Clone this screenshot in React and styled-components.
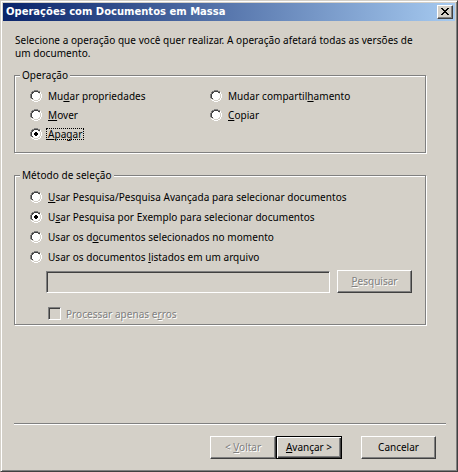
import React from "react";
import styled, { createGlobalStyle } from "styled-components";

const GlobalStyle = createGlobalStyle`
  html, body { margin: 0; padding: 0; background: #d4d0c8; }
  body {
    font-family: "Noto Sans", "Liberation Sans", sans-serif;
    font-size: 10px;
    letter-spacing: 0.05px;
    color: #000;
  }
`;

const Window = styled.div`
  width: 458px;
  height: 472px;
  box-sizing: border-box;
  background: #d4d0c8;
  border: 1px solid;
  border-color: #d4d0c8 #404040 #404040 #d4d0c8;
  box-shadow: inset 1px 1px 0 #fff, inset -1px -1px 0 #808080;
  padding: 2px;
  display: flex;
  flex-direction: column;
`;

const TitleBar = styled.div`
  height: 18px;
  flex: none;
  display: flex;
  align-items: center;
  padding: 0 2px 0 3px;
  background: linear-gradient(to right, #0a246a, #a6caf0);
`;

const Title = styled.span`
  color: #fff;
  font: bold 10px/18px "DejaVu Sans", sans-serif;
  letter-spacing: 0;
  white-space: nowrap;
`;

const CloseButton = styled.span`
  margin-left: auto;
  width: 16px;
  height: 14px;
  box-sizing: border-box;
  display: flex;
  justify-content: center;
  align-items: flex-start;
  padding-top: 2px;
  background: #d4d0c8;
  border: 1px solid;
  border-color: #fff #404040 #404040 #fff;
  box-shadow: inset -1px -1px 0 #808080;
`;

const Client = styled.div`
  flex: 1;
  min-height: 0;
  display: flex;
  flex-direction: column;
  padding: 13px 9px 10px 11px;
`;

const Intro = styled.p`
  margin: 0 0 0 1px;
  width: 410px;
  line-height: 13px;
`;

const GroupBox = styled.div`
  margin-top: ${(p) => p.$mt}px;
  width: 412px;
  box-sizing: border-box;
  border: 1px solid #808080;
  box-shadow: 1px 1px 0 #fff, inset 1px 1px 0 #fff;
  padding-bottom: ${(p) => p.$pb}px;
  display: flex;
  flex-direction: column;
`;

const GroupLabel = styled.span`
  align-self: flex-start;
  margin: -7px 0 0 5px;
  padding: 0 2px;
  background: #d4d0c8;
  line-height: 13px;
  white-space: nowrap;
`;

const RadioGrid = styled.div`
  display: grid;
  grid-template-columns: ${(p) => p.$cols};
  grid-auto-rows: 18px;
  row-gap: ${(p) => p.$gap}px;
  margin: ${(p) => p.$mt}px 0 0 15px;
`;

const Item = styled.label`
  display: flex;
  align-items: center;
  gap: 4px;
`;

const ItemText = styled.span`
  border: 1px ${(p) => (p.$focus ? "dotted #000" : "solid transparent")};
  padding: 0 1px;
  line-height: 10px;
  white-space: nowrap;
  color: ${(p) => (p.$disabled ? "#808080" : "#000")};
  text-shadow: ${(p) => (p.$disabled ? "1px 1px 0 #fff" : "none")};
`;

const Mn = styled.u`
  text-decoration: underline;
  text-underline-offset: 1px;
`;

const InputRow = styled.div`
  display: flex;
  align-items: flex-end;
  gap: 7px;
  height: 23px;
  margin: 4px 0 0 31px;
`;

const Field = styled.input`
  appearance: none;
  width: 284px;
  height: 22px;
  box-sizing: border-box;
  margin: 0;
  padding: 0 3px;
  font: inherit;
  background: #d4d0c8;
  border: 1px solid;
  border-color: #808080 #fff #fff #808080;
  box-shadow: inset 1px 1px 0 #404040, inset -1px -1px 0 #d4d0c8;
  outline: none;
`;

const Button = styled.button`
  width: ${(p) => p.$w}px;
  height: 23px;
  box-sizing: border-box;
  margin: 0 0 0 ${(p) => p.$ml || 0}px;
  padding: 0;
  font: inherit;
  line-height: 21px;
  background: #d4d0c8;
  border: 1px solid;
  border-color: ${(p) => (p.$default ? "#000" : "#fff #404040 #404040 #fff")};
  box-shadow: ${(p) =>
    p.$default
      ? "inset 1px 1px 0 #fff, inset -1px -1px 0 #404040, inset -2px -2px 0 #808080"
      : "inset -1px -1px 0 #808080"};
  color: ${(p) => (p.disabled ? "#808080" : "#000")};
  text-shadow: ${(p) => (p.disabled ? "1px 1px 0 #fff" : "none")};
  white-space: nowrap;
`;

const CheckRow = styled.div`
  display: flex;
  align-items: center;
  gap: 3px;
  height: 13px;
  margin: 14px 0 0 33px;
`;

const CheckBox = styled.span`
  width: 13px;
  height: 13px;
  box-sizing: border-box;
  flex: none;
  background: #d4d0c8;
  border: 1px solid;
  border-color: #808080 #fff #fff #808080;
  box-shadow: inset 1px 1px 0 #404040, inset -1px -1px 0 #d4d0c8;
`;

const Separator = styled.div`
  margin-top: auto;
  height: 2px;
  box-sizing: border-box;
  border-top: 1px solid #808080;
  border-bottom: 1px solid #fff;
`;

const ButtonRow = styled.div`
  display: flex;
  justify-content: flex-end;
  margin-top: 11px;
  padding-right: 10px;
`;

/* pixel maps for the classic controls */
const COLORS = { G: "#808080", D: "#404040", W: "#ffffff", H: "#ffffff", F: "#d4d0c8", X: "#000000" };
const RADIO = [
  "....GGGG....",
  "..GGDDDDGG..",
  ".GDDWWWWDDH.",
  ".GDWWWWWWFH.",
  "GDWWWWWWWWFH",
  "GDWWWWWWWWFH",
  "GDWWWWWWWWFH",
  "GDWWWWWWWWFH",
  ".GDWWWWWWFH.",
  ".HFFWWWWFFH.",
  "..HHFFFFHH..",
  "....HHHH....",
];
const DOT = [
  "............",
  "............",
  "............",
  "............",
  ".....XX.....",
  "....XXXX....",
  "....XXXX....",
  ".....XX.....",
];
const CLOSE = [
  "XX....XX",
  ".XX..XX.",
  "..XXXX..",
  "...XX...",
  "..XXXX..",
  ".XX..XX.",
  "XX....XX",
];

function runs(map) {
  const out = [];
  map.forEach((row, y) => {
    let x = 0;
    while (x < row.length) {
      const c = row[x];
      if (c === ".") { x++; continue; }
      let e = x;
      while (e < row.length && row[e] === c) e++;
      out.push(<rect key={`${y}-${x}`} x={x} y={y} width={e - x} height={1} fill={COLORS[c]} />);
      x = e;
    }
  });
  return out;
}

function PixelIcon({ maps, w, h }) {
  return (
    <svg width={w} height={h} viewBox={`0 0 ${w} ${h}`} shapeRendering="crispEdges" style={{ flex: "none", display: "block" }}>
      {maps.map((m) => runs(m))}
    </svg>
  );
}

const Radio = ({ checked }) => <PixelIcon w={12} h={12} maps={checked ? [RADIO, DOT] : [RADIO]} />;

function RadioItem({ checked, focus, children }) {
  return (
    <Item>
      <Radio checked={checked} />
      <ItemText $focus={focus}>{children}</ItemText>
    </Item>
  );
}

export default function App() {
  return (
    <>
      <GlobalStyle />
      <Window>
        <TitleBar>
          <Title>Operações com Documentos em Massa</Title>
          <CloseButton>
            <PixelIcon w={8} h={7} maps={[CLOSE]} />
          </CloseButton>
        </TitleBar>
        <Client>
          <Intro>
            Selecione a operação que você quer realizar. A operação afetará todas as versões de um documento.
          </Intro>

          <GroupBox $mt={15} $pb={9}>
            <GroupLabel>Operação</GroupLabel>
            <RadioGrid $cols="180px auto" $gap={1} $mt={5}>
              <RadioItem>Mu<Mn>d</Mn>ar propriedades</RadioItem>
              <RadioItem>Mudar compartil<Mn>h</Mn>amento</RadioItem>
              <RadioItem><Mn>M</Mn>over</RadioItem>
              <RadioItem><Mn>C</Mn>opiar</RadioItem>
              <RadioItem checked focus><Mn>A</Mn>pagar</RadioItem>
            </RadioGrid>
          </GroupBox>

          <GroupBox $mt={22} $pb={4}>
            <GroupLabel>Método de seleção</GroupLabel>
            <RadioGrid $cols="auto" $gap={2} $mt={6}>
              <RadioItem><Mn>U</Mn>sar Pesquisa/Pesquisa Avançada para selecionar documentos</RadioItem>
              <RadioItem checked>U<Mn>s</Mn>ar Pesquisa por Exemplo para selecionar documentos</RadioItem>
              <RadioItem>Usar os d<Mn>o</Mn>cumentos selecionados no momento</RadioItem>
              <RadioItem>Usar os documentos <Mn>l</Mn>istados em um arquivo</RadioItem>
            </RadioGrid>
            <InputRow>
              <Field disabled defaultValue="" />
              <Button $w={75} disabled><Mn>P</Mn>esquisar</Button>
            </InputRow>
            <CheckRow>
              <CheckBox />
              <ItemText $disabled>Processar apenas e<Mn>r</Mn>ros</ItemText>
            </CheckRow>
          </GroupBox>

          <Separator />
          <ButtonRow>
            <Button $w={66} disabled>&lt; <Mn>V</Mn>oltar</Button>
            <Button $w={66} $default><Mn>A</Mn>vançar &gt;</Button>
            <Button $w={75} $ml={19}>Cancelar</Button>
          </ButtonRow>
        </Client>
      </Window>
    </>
  );
}
